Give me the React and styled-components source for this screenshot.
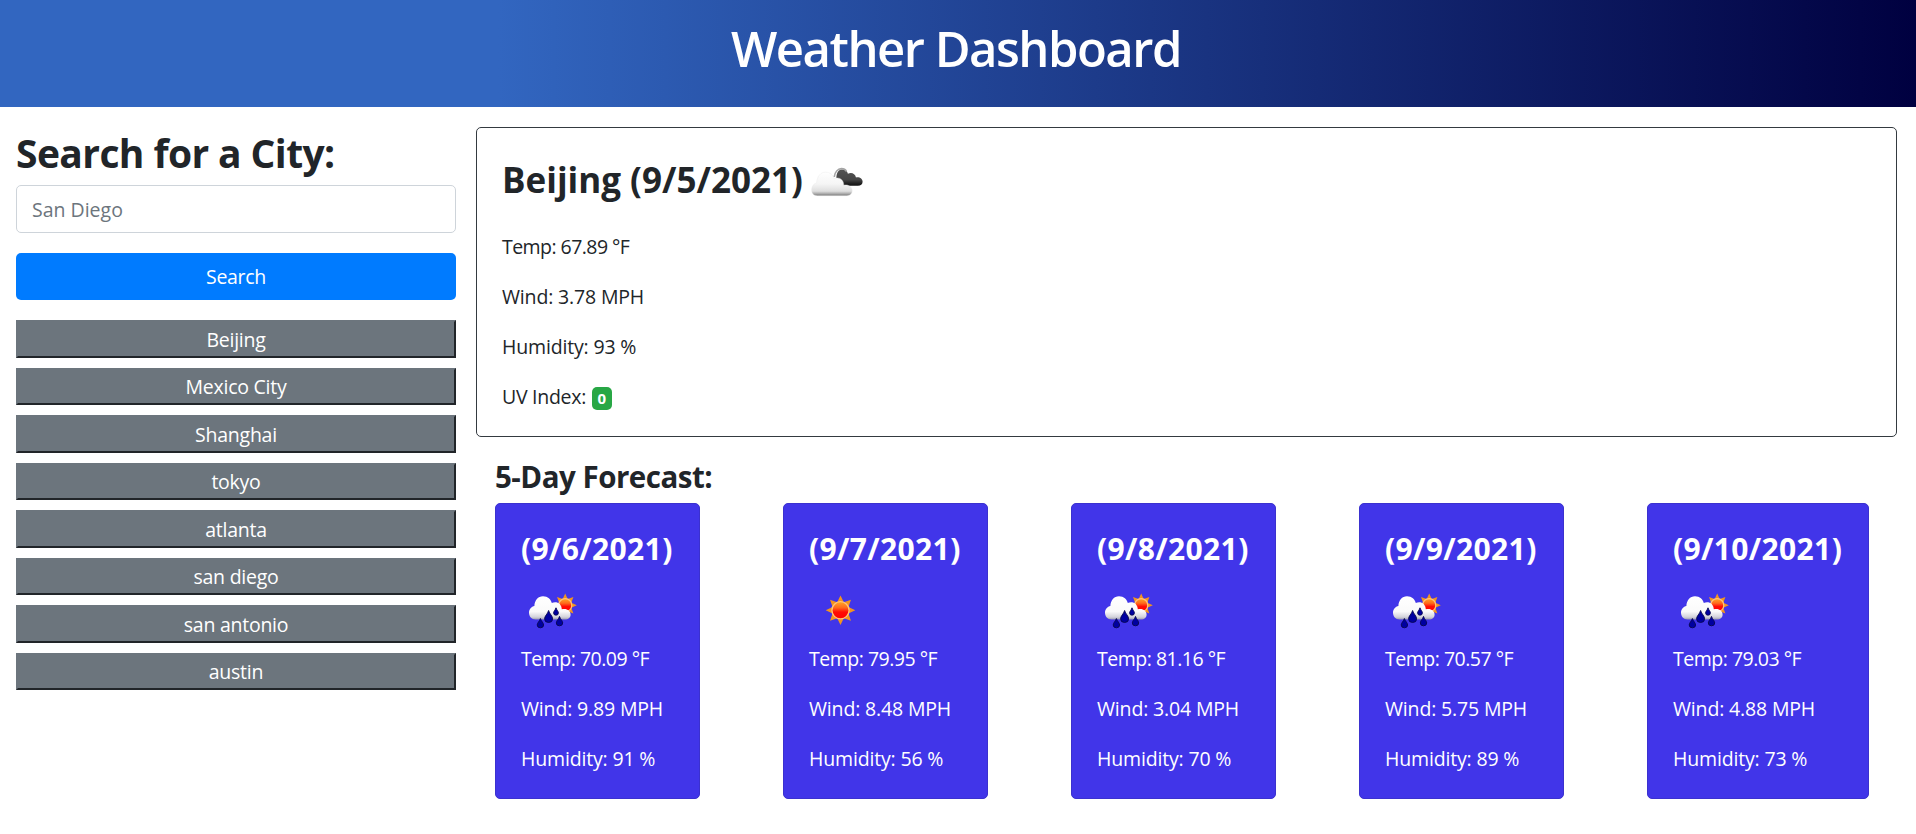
import React from 'react';
import styled, { createGlobalStyle } from 'styled-components';

const GlobalStyle = createGlobalStyle`
  *, *::before, *::after { box-sizing: border-box; }
  body {
    margin: 0;
    background: #fff;
    color: #212529;
    font-family: "Segoe UI", "Open Sans", "Noto Sans", sans-serif;
    font-size: 19.5px;
    line-height: 30px;
  }
  h1, h2, h3, p { margin: 0; }
`;

const Header = styled.header`
  height: 107px;
  padding: 18px 4px 0 0;
  background: linear-gradient(90deg, #3266c0 26%, #000040 100%);
  color: #fff;
  text-align: center;
`;

const Title = styled.h1`
  font-size: 49px;
  font-weight: 590;
  line-height: 60px;
  letter-spacing: -1.5px;
`;

const Layout = styled.div`
  display: flex;
  gap: 20px;
  padding: 20px 19px 0 16px;
`;

const Sidebar = styled.aside`
  flex: 0 0 440px;
  padding-top: 1px;
`;

const SidebarTitle = styled.h2`
  margin-bottom: 8px;
  padding-top: 1px;
  font-size: 39px;
  font-weight: 700;
  line-height: 48px;
  letter-spacing: -0.6px;
`;

const SearchInput = styled.input`
  display: block;
  width: 100%;
  height: 48px;
  padding: 1px 15px 0;
  border: 1px solid #ced4da;
  border-radius: 5px;
  font: inherit;
  letter-spacing: 0;
  &::placeholder { color: #6c757d; opacity: 1; }
`;

const SearchButton = styled.button`
  display: block;
  width: 100%;
  height: 47px;
  margin: 20px 0;
  padding: 0;
  border: 0;
  border-radius: 5px;
  background: #007bff;
  color: #fff;
  font: inherit;
  letter-spacing: -0.3px;
`;

const History = styled.div`
  display: flex;
  flex-direction: column;
  gap: 10px;
`;

const HistoryButton = styled.button`
  height: 37.5px;
  padding: 2px 0 0;
  border: 2px solid;
  border-color: #6c757d #212529 #212529 #6c757d;
  background: #6c757d;
  color: #fff;
  font: inherit;
  letter-spacing: -0.25px;
`;

const Main = styled.main`
  flex: 1;
`;

const CurrentCard = styled.section`
  height: 310px;
  padding: 22px 25px 0;
  border: 1px solid #343a40;
  border-radius: 5px;
`;

const CurrentHeading = styled.div`
  display: flex;
  align-items: center;
  height: 60px;
  margin-bottom: 22px;
`;

const CityName = styled.h2`
  font-size: 35px;
  font-weight: 700;
  line-height: 42px;
  white-space: nowrap;
`;

const Stat = styled.p`
  letter-spacing: ${(p) => p.$spacing || '-0.16px'};
  white-space: nowrap;
  & + & { margin-top: 20px; }
`;

const UvBadge = styled.span`
  display: inline-block;
  width: 20px;
  height: 23px;
  margin-left: 1px;
  border-radius: 5px;
  background: #28a745;
  color: #fff;
  font-size: 15px;
  font-weight: 700;
  line-height: 23px;
  letter-spacing: 0;
  text-align: center;
`;

const Forecast = styled.section`
  padding: 22px 0 0 19px;
`;

const ForecastTitle = styled.h3`
  margin-bottom: 8px;
  font-size: 29.5px;
  font-weight: 700;
  line-height: 36px;
  letter-spacing: -0.5px;
`;

const Days = styled.div`
  display: grid;
  grid-template-columns: repeat(4, 288px) auto;
  justify-items: start;
  justify-content: start;
`;

const DayCard = styled.article`
  width: ${(p) => (p.$wide ? 222 : 205)}px;
  height: 296px;
  padding: 27px 25px 0;
  border: 1px solid #3b31cf;
  border-radius: 5px;
  background: #4135e9;
  color: #fff;
`;

const DayDate = styled.h3`
  font-size: 30px;
  font-weight: 700;
  line-height: 36px;
  letter-spacing: 0.36px;
  white-space: nowrap;
`;

const DayIcon = styled.div`
  height: 77px;
  padding: 13px 0 0 1px;
  & > svg { display: block; }
`;

function rays(cx, cy, inner, outer) {
  const pts = [];
  for (let i = 0; i < 16; i += 1) {
    const r = i % 2 ? inner : outer;
    const a = (i * Math.PI) / 8 - Math.PI / 2;
    pts.push(`${(cx + r * Math.cos(a)).toFixed(2)},${(cy + r * Math.sin(a)).toFixed(2)}`);
  }
  return pts.join(' ');
}

function Sun({ cx, cy, r, outer, id }) {
  return (
    <g>
      <defs>
        <linearGradient id={id} x1="0" y1="0" x2="0" y2="1">
          <stop offset="0" stopColor="#ffa726" />
          <stop offset="0.35" stopColor="#ff6a1c" />
          <stop offset="0.6" stopColor="#ff0d05" />
          <stop offset="1" stopColor="#ff0000" />
        </linearGradient>
      </defs>
      <polygon points={rays(cx, cy, r, outer)} fill="#f2941f" />
      <circle cx={cx} cy={cy} r={r} fill={`url(#${id})`} stroke="#ffc27a" strokeWidth="1.3" />
    </g>
  );
}

function Drop({ x, y, h, w }) {
  const d = `M${x} ${y} C${x + w * 0.12} ${y + h * 0.3} ${x + w / 2} ${y + h * 0.45} ${x + w / 2} ${y + h * 0.7}
    A${w / 2} ${h * 0.3} 0 0 1 ${x - w / 2} ${y + h * 0.7}
    C${x - w / 2} ${y + h * 0.45} ${x - w * 0.12} ${y + h * 0.3} ${x} ${y}Z`;
  return <path d={d} fill="#0000a0" stroke="#070750" strokeWidth="0.9" />;
}

function SunIcon() {
  return (
    <svg width="62" height="60" viewBox="5 0 62 60">
      <Sun cx={35.5} cy={30.3} r={8.6} outer={14.8} id="sun-clear" />
    </svg>
  );
}

function RainIcon({ id }) {
  return (
    <svg width="62" height="60" viewBox="7 0 62 60">
      <defs>
        <linearGradient id={`cloud-${id}`} gradientUnits="userSpaceOnUse" x1="0" y1="16" x2="0" y2="40">
          <stop offset="0" stopColor="#fff" />
          <stop offset="0.65" stopColor="#fafafa" />
          <stop offset="0.88" stopColor="#d2d2da" />
          <stop offset="1" stopColor="#8e8ea6" />
        </linearGradient>
      </defs>
      <Sun cx={50.2} cy={25.2} r={6.6} outer={11.6} id={`sun-${id}`} />
      <path
        d="M20.5 39.5 C16.5 39.5 14 36.5 14 32.8 C14 29.2 16.5 26.5 19.4 26 C19.6 20.4 23 16.2 28 16.2 C32.8 16.2 36 19.2 36.8 23 C41.5 20.8 46.6 23.5 46.8 29.3 C51.2 27.8 55.6 30.5 55.6 34.4 C55.6 37.6 53.2 39.5 50 39.5 Z"
        fill={`url(#cloud-${id})`}
      />
      <Drop x={33.6} y={30.5} h={12} w={8} />
      <Drop x={41} y={27.8} h={7.4} w={4.8} />
      <Drop x={25.4} y={38.5} h={9.3} w={6.4} />
      <Drop x={44.5} y={36.4} h={9.4} w={6.4} />
    </svg>
  );
}

function CloudsIcon() {
  return (
    <svg width="62" height="60" viewBox="2.6 0 62 60">
      <defs>
        <linearGradient id="cloud-back" gradientUnits="userSpaceOnUse" x1="0" y1="18" x2="0" y2="36">
          <stop offset="0" stopColor="#555" />
          <stop offset="0.65" stopColor="#464646" />
          <stop offset="0.85" stopColor="#222" />
          <stop offset="1" stopColor="#111" />
        </linearGradient>
        <linearGradient id="cloud-front" gradientUnits="userSpaceOnUse" x1="0" y1="22" x2="0" y2="46">
          <stop offset="0" stopColor="#fff" />
          <stop offset="0.5" stopColor="#f5f5f5" />
          <stop offset="0.8" stopColor="#dedede" />
          <stop offset="0.91" stopColor="#a8a8a8" />
          <stop offset="1" stopColor="#707070" />
        </linearGradient>
      </defs>
      <path
        d="M36 28 C36 22 38.5 19.5 42 19.5 C45 19.5 47 21.2 47.5 23.8 C50.5 21.8 54.8 23.2 55.6 27.4 C59.5 26.8 62.2 29 62.2 31.7 C62.2 34.4 60.2 35.8 57.5 35.8 L43 35.8 Z"
        fill="url(#cloud-back)"
      />
      <path d="M33.8 27 C34.5 22 37.5 18.8 41 18.7 C43.5 18.7 45.2 19.8 46 21.4" fill="none" stroke="#a4a4a4" strokeWidth="1.7" />
      <path
        d="M16.8 45.7 C13 45.7 11.2 43 11.2 40 C11.2 36 13.2 33.8 16.2 33 C16.6 26.5 20 22.2 25 22.2 C29.8 22.2 33 25 33.6 28.8 C38.5 26.4 43.4 29.6 43.4 35.2 C47.6 34 51.8 36.8 51.8 40.8 C51.8 43.8 49.5 45.7 46.6 45.7 Z"
        fill="url(#cloud-front)" stroke="#e9e9e9" strokeWidth="0.4"
      />
    </svg>
  );
}

const cities = ['Beijing', 'Mexico City', 'Shanghai', 'tokyo', 'atlanta', 'san diego', 'san antonio', 'austin'];

const days = [
  { date: '9/6/2021', icon: 'rain', temp: '70.09', wind: '9.89', humidity: 91 },
  { date: '9/7/2021', icon: 'sun', temp: '79.95', wind: '8.48', humidity: 56 },
  { date: '9/8/2021', icon: 'rain', temp: '81.16', wind: '3.04', humidity: 70 },
  { date: '9/9/2021', icon: 'rain', temp: '70.57', wind: '5.75', humidity: 89 },
  { date: '9/10/2021', icon: 'rain', temp: '79.03', wind: '4.88', humidity: 73 },
];

export default function App() {
  return (
    <>
      <GlobalStyle />
      <Header>
        <Title>Weather Dashboard</Title>
      </Header>
      <Layout>
        <Sidebar>
          <SidebarTitle>Search for a City:</SidebarTitle>
          <SearchInput placeholder="San Diego" />
          <SearchButton>Search</SearchButton>
          <History>
            {cities.map((city) => <HistoryButton key={city}>{city}</HistoryButton>)}
          </History>
        </Sidebar>
        <Main>
          <CurrentCard>
            <CurrentHeading>
              <CityName>Beijing (9/5/2021)</CityName>
              <CloudsIcon />
            </CurrentHeading>
            <Stat $spacing="-0.55px">Temp: 67.89 °F</Stat>
            <Stat>Wind: 3.78 MPH</Stat>
            <Stat>Humidity: 93 %</Stat>
            <Stat $spacing="-0.28px">UV Index: <UvBadge>0</UvBadge></Stat>
          </CurrentCard>
          <Forecast>
            <ForecastTitle>5-Day Forecast:</ForecastTitle>
            <Days>
              {days.map((day, i) => (
                <DayCard key={day.date} $wide={i === 4}>
                  <DayDate>({day.date})</DayDate>
                  <DayIcon>{day.icon === 'sun' ? <SunIcon /> : <RainIcon id={`day${i}`} />}</DayIcon>
                  <Stat $spacing="-0.5px">Temp: {day.temp} °F</Stat>
                  <Stat>Wind: {day.wind} MPH</Stat>
                  <Stat>Humidity: {day.humidity} %</Stat>
                </DayCard>
              ))}
            </Days>
          </Forecast>
        </Main>
      </Layout>
    </>
  );
}
